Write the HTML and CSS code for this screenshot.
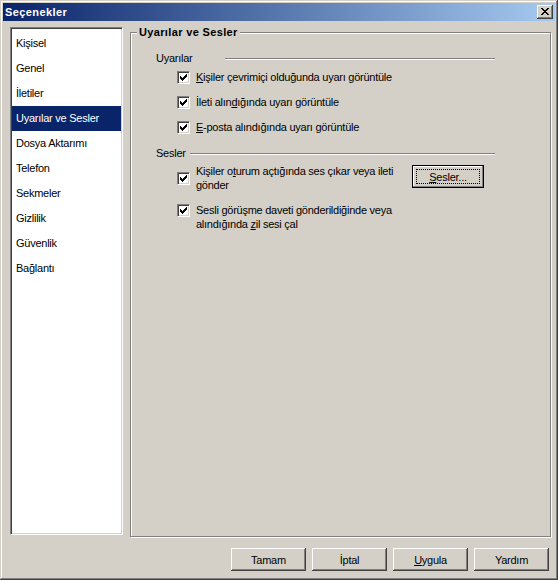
FILE: index.html
```html
<!DOCTYPE html>
<html lang="tr">
<head>
<meta charset="utf-8">
<title>Seçenekler</title>
<link rel="stylesheet" href="styles.css">
</head>
<body>
<div class="window">
  <div class="titlebar">
    <span class="title">Seçenekler</span>
    <button class="close" aria-label="Kapat">
      <svg width="8" height="7" viewBox="0 0 8 7" shape-rendering="crispEdges"><path fill="#000" d="M0 0h2v1H0z M6 0h2v1H6z M1 1h2v1H1z M5 1h2v1H5z M2 2h4v1H2z M3 3h2v1H3z M2 4h4v1H2z M1 5h2v1H1z M5 5h2v1H5z M0 6h2v1H0z M6 6h2v1H6z"/></svg>
    </button>
  </div>
  <div class="main">
    <ul class="list">
      <li>Kişisel</li>
      <li>Genel</li>
      <li>İletiler</li>
      <li class="selected">Uyarılar ve Sesler</li>
      <li>Dosya Aktarımı</li>
      <li>Telefon</li>
      <li>Sekmeler</li>
      <li>Gizlilik</li>
      <li>Güvenlik</li>
      <li>Bağlantı</li>
    </ul>
    <div class="group">
      <div class="group-title">Uyarılar ve Sesler</div>

      <div class="section-head"><span class="section-label wide">Uyarılar</span><span class="rule"></span></div>
      <div class="check-row first">
        <span class="cb"><svg width="7" height="7" viewBox="0 0 7 7" shape-rendering="crispEdges"><path fill="#000" d="M0 2h1v3H0z M1 3h1v3H1z M2 4h1v3H2z M3 3h1v3H3z M4 2h1v3H4z M5 1h1v3H5z M6 0h1v3H6z"/></svg></span>
        <span class="label"><u>K</u>işiler çevrimiçi olduğunda uyarı görüntüle</span>
      </div>
      <div class="check-row">
        <span class="cb"><svg width="7" height="7" viewBox="0 0 7 7" shape-rendering="crispEdges"><path fill="#000" d="M0 2h1v3H0z M1 3h1v3H1z M2 4h1v3H2z M3 3h1v3H3z M4 2h1v3H4z M5 1h1v3H5z M6 0h1v3H6z"/></svg></span>
        <span class="label">İleti alın<u>d</u>ığında uyarı görüntüle</span>
      </div>
      <div class="check-row">
        <span class="cb"><svg width="7" height="7" viewBox="0 0 7 7" shape-rendering="crispEdges"><path fill="#000" d="M0 2h1v3H0z M1 3h1v3H1z M2 4h1v3H2z M3 3h1v3H3z M4 2h1v3H4z M5 1h1v3H5z M6 0h1v3H6z"/></svg></span>
        <span class="label"><u>E</u>-posta alındığında uyarı görüntüle</span>
      </div>

      <div class="section-head second"><span class="section-label">Sesler</span><span class="rule"></span></div>
      <div class="check-row multi first-sound">
        <span class="cb"><svg width="7" height="7" viewBox="0 0 7 7" shape-rendering="crispEdges"><path fill="#000" d="M0 2h1v3H0z M1 3h1v3H1z M2 4h1v3H2z M3 3h1v3H3z M4 2h1v3H4z M5 1h1v3H5z M6 0h1v3H6z"/></svg></span>
        <span class="label wrap">Kişiler o<u>t</u>urum açtığında ses çıkar veya ileti<br>gönder</span>
        <button class="btn default"><span class="focus"><u>S</u>esler...</span></button>
      </div>
      <div class="check-row multi top">
        <span class="cb"><svg width="7" height="7" viewBox="0 0 7 7" shape-rendering="crispEdges"><path fill="#000" d="M0 2h1v3H0z M1 3h1v3H1z M2 4h1v3H2z M3 3h1v3H3z M4 2h1v3H4z M5 1h1v3H5z M6 0h1v3H6z"/></svg></span>
        <span class="label">Sesli görüşme daveti gönderildiğinde veya<br>alındığında <u>z</u>il sesi çal</span>
      </div>
    </div>
  </div>
  <div class="footer">
    <button class="btn">Tamam</button>
    <button class="btn">İptal</button>
    <button class="btn"><u>U</u>ygula</button>
    <button class="btn">Yardım</button>
  </div>
</div>
</body>
</html>
```

FILE: styles.css
```css
html, body {
  margin: 0;
  padding: 0;
}

body {
  font-family: "Liberation Sans", Arial, sans-serif;
  font-size: 11px;
  letter-spacing: -0.25px;
  color: #000;
  background: #d4d0c8;
}

.window {
  box-sizing: border-box;
  width: 558px;
  height: 580px;
  padding: 3px;
  background: #d4d0c8;
  box-shadow: inset -1px -1px 0 #404040, inset 1px 1px 0 #d4d0c8,
              inset -2px -2px 0 #808080, inset 2px 2px 0 #fff;
  display: flex;
  flex-direction: column;
}

.titlebar {
  height: 18px;
  flex: none;
  display: flex;
  align-items: center;
  padding-left: 2px;
  background: linear-gradient(to right, #0a246a, #a6caf0);
}

.title {
  color: #fff;
  font-weight: bold;
  letter-spacing: 0.4px;
  line-height: 18px;
}

.close {
  margin-left: auto;
  margin-right: 2px;
  width: 16px;
  height: 14px;
  padding: 0;
  border: 0;
  background: #d4d0c8;
  box-shadow: inset -1px -1px 0 #404040, inset 1px 1px 0 #fff,
              inset -2px -2px 0 #808080, inset 2px 2px 0 #d4d0c8;
  display: flex;
  align-items: center;
  justify-content: center;
}

.close svg {
  display: block;
  margin: 0 0 1px 0;
}

.main {
  display: flex;
  align-items: flex-start;
  padding-left: 7px;
  flex: none;
}

.list {
  box-sizing: border-box;
  width: 113px;
  height: 508px;
  margin: 6px 0 0 0;
  padding: 3px 1px 1px 1px;
  list-style: none;
  background: #fff;
  border: 1px solid;
  border-color: #808080 #fff #fff #808080;
  box-shadow: inset 1px 1px 0 #404040, inset -1px -1px 0 #d4d0c8;
}

.list li {
  height: 25px;
  line-height: 25px;
  padding-left: 4px;
  white-space: nowrap;
}

.list li.selected {
  background: #0a246a;
  color: #fff;
}

.group {
  box-sizing: border-box;
  width: 421px;
  height: 505px;
  margin: 11px 0 0 7px;
  padding: 0 0 0 25px;
  border: 1px solid #808080;
  box-shadow: inset 1px 1px 0 #fff, 1px 1px 0 #fff;
  display: flex;
  flex-direction: column;
  align-items: flex-start;
}

.group-title {
  margin: -7px 0 0 -19px;
  padding: 0 2px;
  line-height: 13px;
  font-weight: bold;
  letter-spacing: 0.35px;
  background: #d4d0c8;
}

.section-head {
  display: flex;
  align-items: center;
  width: 339px;
  height: 13px;
  line-height: 13px;
  margin-top: 13px;
}

.section-head.second {
  margin-top: 13px;
}

.section-label.wide {
  width: 65px;
}

.rule {
  flex: 1;
  height: 0;
  margin-left: 4px;
  border-top: 1px solid #808080;
  border-bottom: 1px solid #fff;
}

.check-row {
  display: flex;
  align-items: center;
  gap: 6px;
  margin-left: 21px;
  margin-top: 12px;
  line-height: 13px;
}

.check-row.first {
  margin-top: 6px;
}

.check-row.multi .label {
  line-height: 14px;
}

.check-row.first-sound {
  margin-top: 4px;
}

.check-row.top {
  align-items: flex-start;
  margin-top: 11px;
}

.check-row.top .cb {
  margin-top: 1px;
}

.label.wrap {
  width: 210px;
}

.cb {
  box-sizing: border-box;
  flex: none;
  width: 13px;
  height: 13px;
  padding: 2px;
  border: 1px solid;
  border-color: #808080 #fff #fff #808080;
  box-shadow: inset 1px 1px 0 #404040, inset -1px -1px 0 #d4d0c8;
  background: #fff;
}

.cb svg {
  display: block;
}

.footer {
  flex: none;
  display: flex;
  justify-content: flex-end;
  gap: 6px;
  margin-top: 11px;
  padding-right: 6px;
}

.btn {
  box-sizing: border-box;
  width: 75px;
  height: 23px;
  padding: 0;
  border: 0;
  font-family: inherit;
  font-size: 11px;
  letter-spacing: -0.25px;
  color: #000;
  background: #d4d0c8;
  box-shadow: inset -1px -1px 0 #404040, inset 1px 1px 0 #fff,
              inset -2px -2px 0 #808080, inset 2px 2px 0 #d4d0c8;
}

.btn.default {
  align-self: flex-start;
  margin-top: 1px;
  width: 72px;
  padding: 3px;
  border: 1px solid #000;
  box-shadow: inset -1px -1px 0 #808080, inset 1px 1px 0 #fff;
  display: flex;
}

.focus {
  flex: 1;
  display: flex;
  align-items: center;
  justify-content: center;
  border: 1px dotted #000;
}
```
